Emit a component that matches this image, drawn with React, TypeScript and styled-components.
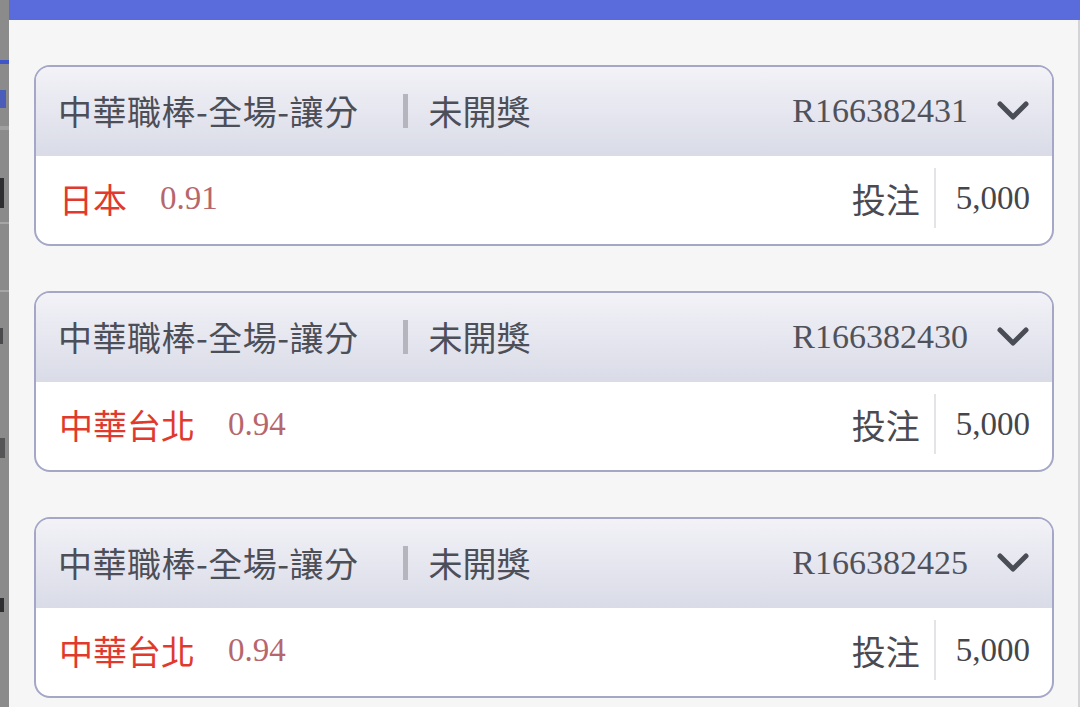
import styled, { createGlobalStyle } from "styled-components";

const GlobalStyle = createGlobalStyle`
	html, body {
		margin: 0;
		padding: 0;
		height: 100%;
		overflow: hidden;
		background: #f6f6f7;
	}
	#root {
		height: 100%;
	}
`;

const Page = styled.div`
	display: flex;
	height: 707px;
	width: 1080px;
	font-family: "Noto Sans CJK TC", "Noto Sans", sans-serif;
`;

const Shade = styled.div`
	width: 9px;
	flex-shrink: 0;
	background: #8b8b8c;
	display: flex;
	flex-direction: column;
	overflow: hidden;
`;

const ShadeMark = styled.div<{ $top: number; $h: number; $w: number; $c: string }>`
	margin-top: ${(p) => p.$top}px;
	height: ${(p) => p.$h}px;
	width: ${(p) => p.$w}px;
	background: ${(p) => p.$c};
	flex-shrink: 0;
`;

const Sheet = styled.div`
	flex: 1;
	display: flex;
	flex-direction: column;
	background: #f6f6f7;
`;

const TopBar = styled.div`
	height: 20px;
	background: #5a6cdc;
	flex-shrink: 0;
`;

const List = styled.div`
	display: flex;
	flex-direction: column;
	gap: 45px;
	padding: 45px 24px 0 25px;
	border-right: 2px solid #d4d4d8;
	flex: 1;
`;

const Card = styled.section`
	border: 2px solid #a4a8c6;
	border-radius: 16px;
	overflow: hidden;
	background: #fff;
	flex-shrink: 0;
`;

const Header = styled.div`
	height: 89px;
	display: flex;
	align-items: center;
	padding: 0 22px 2px 22px;
	box-sizing: border-box;
	background: linear-gradient(180deg, #f2f2f7 0%, #d9dbe7 100%);
	color: #4c4e58;
	font-size: 34px;
`;

const Title = styled.span`
	letter-spacing: 0.5px;
`;

const Divider = styled.span`
	width: 5px;
	height: 34px;
	background: #b4b5bd;
	margin: 0 21px 0 44px;
`;

const Status = styled.span``;

const Serial = styled.span`
	margin-left: auto;
	font-family: "Liberation Serif", serif;
	font-size: 34px;
	color: #50525b;
`;

const Chevron = styled.svg`
	margin-left: 28px;
	width: 34px;
	height: 22px;
`;

const Body = styled.div`
	height: 88px;
	display: flex;
	align-items: center;
	padding: 0 22px 4px 23px;
	box-sizing: border-box;
`;

const Team = styled.span`
	color: #e03a2f;
	font-size: 34px;
`;

const Odds = styled.span`
	margin-left: 33px;
	font-family: "Liberation Serif", serif;
	font-size: 33px;
	color: #b6676d;
`;

const BetLabel = styled.span`
	margin-left: auto;
	font-size: 34px;
	color: #4a4a50;
`;

const BetDivider = styled.span`
	width: 2px;
	height: 60px;
	background: #e3e3e8;
	margin: 0 20px 0 14px;
`;

const Amount = styled.span`
	font-family: "Liberation Serif", serif;
	font-size: 33px;
	color: #45464c;
`;

const bets = [
	{ id: "R166382431", team: "日本", odds: "0.91", amount: "5,000" },
	{ id: "R166382430", team: "中華台北", odds: "0.94", amount: "5,000" },
	{ id: "R166382425", team: "中華台北", odds: "0.94", amount: "5,000" },
];

const App = () => {
	return (
		<>
			<GlobalStyle />
			<Page>
				<Shade>
					<ShadeMark $top={60} $h={4} $w={9} $c="#3f55c8" />
					<ShadeMark $top={26} $h={18} $w={6} $c="#4a5db8" />
					<ShadeMark $top={18} $h={4} $w={9} $c="#a0a0a2" />
					<ShadeMark $top={48} $h={30} $w={4} $c="#2e2e30" />
					<ShadeMark $top={14} $h={2} $w={9} $c="#a6a6a8" />
					<ShadeMark $top={66} $h={2} $w={9} $c="#a6a6a8" />
					<ShadeMark $top={36} $h={16} $w={3} $c="#4a4a4c" />
					<ShadeMark $top={94} $h={20} $w={5} $c="#555557" />
					<ShadeMark $top={140} $h={14} $w={4} $c="#2e2e30" />
				</Shade>
				<Sheet>
					<TopBar />
					<List>
						{bets.map((bet) => (
							<Card key={bet.id}>
								<Header>
									<Title>中華職棒-全場-讓分</Title>
									<Divider />
									<Status>未開獎</Status>
									<Serial>{bet.id}</Serial>
									<Chevron viewBox="0 0 34 22">
										<polyline
											points="4,4 17,17 30,4"
											fill="none"
											stroke="#4a4c56"
											strokeWidth="5"
											strokeLinecap="round"
											strokeLinejoin="round"
										/>
									</Chevron>
								</Header>
								<Body>
									<Team>{bet.team}</Team>
									<Odds>{bet.odds}</Odds>
									<BetLabel>投注</BetLabel>
									<BetDivider />
									<Amount>{bet.amount}</Amount>
								</Body>
							</Card>
						))}
					</List>
				</Sheet>
			</Page>
		</>
	);
};

export default App;
